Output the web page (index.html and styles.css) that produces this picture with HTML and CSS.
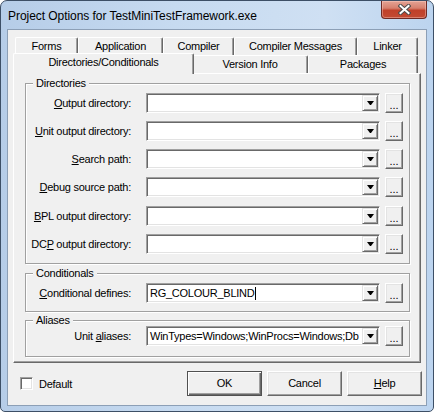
FILE: index.html
```html
<!DOCTYPE html>
<html>
<head>
<meta charset="utf-8">
<link rel="stylesheet" href="styles.css">
</head>
<body>
<div class="window">
  <div class="titlebar">
    <span class="title">Project Options for TestMiniTestFramework.exe</span>
    <div class="close">
      <svg width="13" height="11" viewBox="0 0 13 11">
        <path d="M2.5 2 L10.5 9 M10.5 2 L2.5 9" stroke="#4b4b4b" stroke-width="4" stroke-linecap="square" fill="none"/>
        <path d="M2.5 2 L10.5 9 M10.5 2 L2.5 9" stroke="#ffffff" stroke-width="2" stroke-linecap="square" fill="none"/>
      </svg>
    </div>
  </div>
  <div class="client">
    <div class="pages">
      <div class="tabrow">
        <div class="tab t-forms">Forms</div>
        <div class="tab t-app">Application</div>
        <div class="tab t-comp">Compiler</div>
        <div class="tab t-msg">Compiler Messages</div>
        <div class="tab t-link">Linker</div>
      </div>
      <div class="tabrow">
        <div class="tab t-dirs selected">Directories/Conditionals</div>
        <div class="tab t-ver">Version Info</div>
        <div class="tab t-pkg">Packages</div>
      </div>
      <div class="sheet">
        <div class="group g-dirs">
          <div class="gtitle">Directories</div>
          <div class="rows">
            <div class="row">
              <div class="label"><u>O</u>utput directory:</div>
              <div class="combo"><div class="ctext"></div><div class="drop"><svg width="7" height="4" viewBox="0 0 7 4"><polygon points="0,0 7,0 4,4 3,4" fill="#000"/></svg></div></div>
              <div class="dots">...</div>
            </div>
            <div class="row">
              <div class="label"><u>U</u>nit output directory:</div>
              <div class="combo"><div class="ctext"></div><div class="drop"><svg width="7" height="4" viewBox="0 0 7 4"><polygon points="0,0 7,0 4,4 3,4" fill="#000"/></svg></div></div>
              <div class="dots">...</div>
            </div>
            <div class="row">
              <div class="label"><u>S</u>earch path:</div>
              <div class="combo"><div class="ctext"></div><div class="drop"><svg width="7" height="4" viewBox="0 0 7 4"><polygon points="0,0 7,0 4,4 3,4" fill="#000"/></svg></div></div>
              <div class="dots">...</div>
            </div>
            <div class="row">
              <div class="label"><u>D</u>ebug source path:</div>
              <div class="combo"><div class="ctext"></div><div class="drop"><svg width="7" height="4" viewBox="0 0 7 4"><polygon points="0,0 7,0 4,4 3,4" fill="#000"/></svg></div></div>
              <div class="dots">...</div>
            </div>
            <div class="row shift">
              <div class="label"><u>B</u>PL output directory:</div>
              <div class="combo"><div class="ctext"></div><div class="drop"><svg width="7" height="4" viewBox="0 0 7 4"><polygon points="0,0 7,0 4,4 3,4" fill="#000"/></svg></div></div>
              <div class="dots">...</div>
            </div>
            <div class="row">
              <div class="label">DC<u>P</u> output directory:</div>
              <div class="combo"><div class="ctext"></div><div class="drop"><svg width="7" height="4" viewBox="0 0 7 4"><polygon points="0,0 7,0 4,4 3,4" fill="#000"/></svg></div></div>
              <div class="dots">...</div>
            </div>
          </div>
        </div>
        <div class="group g-cond">
          <div class="gtitle">Conditionals</div>
          <div class="rows">
            <div class="row">
              <div class="label"><u>C</u>onditional defines:</div>
              <div class="combo"><div class="ctext">RG_COLOUR_BLIND<span class="caret"></span></div><div class="drop"><svg width="7" height="4" viewBox="0 0 7 4"><polygon points="0,0 7,0 4,4 3,4" fill="#000"/></svg></div></div>
              <div class="dots">...</div>
            </div>
          </div>
        </div>
        <div class="group g-alias">
          <div class="gtitle">Aliases</div>
          <div class="rows">
            <div class="row">
              <div class="label">Unit <u>a</u>liases:</div>
              <div class="combo"><div class="ctext">WinTypes=Windows;WinProcs=Windows;Db</div><div class="drop"><svg width="7" height="4" viewBox="0 0 7 4"><polygon points="0,0 7,0 4,4 3,4" fill="#000"/></svg></div></div>
              <div class="dots">...</div>
            </div>
          </div>
        </div>
      </div>
    </div>
    <div class="footer">
      <div class="check"></div>
      <span class="check-label">Default</span>
      <div class="buttons">
        <div class="btn default">OK</div>
        <div class="btn">Cancel</div>
        <div class="btn"><u>H</u>elp</div>
      </div>
    </div>
  </div>
</div>
</body>
</html>
```

FILE: styles.css
```css
html, body {
  margin: 0;
  padding: 0;
  background: #ffffff;
}

body {
  font-family: "Liberation Sans", Arial, sans-serif;
  font-size: 11px;
  letter-spacing: -0.25px;
  color: #000;
}

.window {
  width: 434px;
  height: 412px;
  box-sizing: border-box;
  border: 1px solid #3d4f66;
  border-radius: 7px 7px 5px 5px;
  background: linear-gradient(90deg, #b6cde8 0%, #c6daf0 40%, #cfe0f3 75%, #bcd4ef 100%);
  overflow: hidden;
}

.titlebar {
  height: 28px;
  display: flex;
  align-items: flex-start;
  padding-left: 7px;
}

.title {
  font-family: "Liberation Sans", Arial, sans-serif;
  font-size: 12px;
  letter-spacing: -0.05px;
  line-height: 14px;
  margin-top: 8px;
  color: #000;
}

.close {
  margin-left: auto;
  margin-right: 6px;
  width: 46px;
  height: 18px;
  box-sizing: border-box;
  border: 1px solid #6e2a25;
  border-top: none;
  border-radius: 0 0 4px 4px;
  background: linear-gradient(180deg, #e4a395 0%, #d6806e 42%, #c0402a 55%, #c24a33 100%);
  box-shadow: inset 0 0 0 1px rgba(255, 215, 205, 0.4);
  display: flex;
  align-items: center;
  justify-content: center;
}

.close svg {
  display: block;
}

.client {
  margin-left: 6px;
  width: 420px;
  height: 377px;
  box-sizing: border-box;
  border: 1px solid #8c9fb6;
  background: #f0f0f0;
}

.pages {
  margin: 7px 5px 0 5px;
  width: 408px;
}

.tabrow {
  height: 18px;
  display: flex;
  align-items: flex-end;
  padding-left: 2px;
}

.tab {
  box-sizing: border-box;
  height: 18px;
  border-top: 1px solid #ffffff;
  border-left: 1px solid #ffffff;
  border-right: 1px solid #696969;
  border-radius: 2px 2px 0 0;
  box-shadow: inset -1px 0 0 #a0a0a0;
  background: #f0f0f0;
  text-align: center;
  line-height: 17px;
  white-space: nowrap;
}

.t-forms { width: 63px; }
.t-app { width: 85px; }
.t-comp { width: 71px; }
.t-msg { width: 123px; }
.t-link { width: 61px; }
.t-dirs { width: 177px; }
.t-ver { width: 116px; }
.t-pkg { width: 110px; }

.tab.selected {
  width: 181px;
  height: 21px;
  margin: 0 -2px -1px -2px;
  line-height: 17px;
  position: relative;
  z-index: 1;
}

.sheet {
  box-sizing: border-box;
  height: 290px;
  border-top: 1px solid #ffffff;
  border-left: 1px solid #ffffff;
  border-right: 1px solid #696969;
  border-bottom: 1px solid #696969;
  box-shadow: inset -1px -1px 0 #a0a0a0;
  padding-left: 11px;
  overflow: hidden;
}

.group {
  box-sizing: border-box;
  width: 385px;
  border: 1px solid #a0a0a0;
  box-shadow: inset 1px 1px 0 #ffffff, 1px 1px 0 #ffffff;
  padding-right: 5px;
}

.g-dirs { margin-top: 9px; padding-bottom: 9px; }
.g-cond { margin-top: 9px; padding-bottom: 8px; }
.g-alias { margin-top: 8px; padding-bottom: 10px; }

.gtitle {
  height: 13px;
  line-height: 13px;
  margin-top: -7px;
  margin-left: 7px;
  padding: 0 3px;
  width: fit-content;
  background: #f0f0f0;
  position: relative;
}

.rows {
  display: flex;
  flex-direction: column;
  gap: 8px;
  padding-top: 3px;
}

.row.shift {
  margin-top: 1px;
}

.g-alias .rows {
  padding-top: 0;
  margin-top: -1px;
}

.row {
  display: flex;
  align-items: center;
  height: 20px;
}

.label {
  width: 105px;
  text-align: right;
  line-height: 20px;
  white-space: nowrap;
  margin-right: 15px;
}

.combo {
  box-sizing: border-box;
  width: 234px;
  height: 20px;
  border: 1px solid;
  border-color: #a0a0a0 #ffffff #ffffff #a0a0a0;
  box-shadow: inset 1px 1px 0 #696969, inset -1px -1px 0 #e3e3e3;
  background: #ffffff;
  display: flex;
  padding: 1px;
}

.ctext {
  flex: 1;
  min-width: 0;
  overflow: hidden;
  white-space: nowrap;
  line-height: 16px;
  padding-left: 2px;
  display: flex;
  align-items: center;
}

.caret {
  display: inline-block;
  width: 1px;
  height: 13px;
  background: #000;
  margin-left: 1px;
}

.drop {
  box-sizing: border-box;
  flex: none;
  width: 16px;
  height: 16px;
  border: 1px solid;
  border-color: #e3e3e3 #696969 #696969 #e3e3e3;
  box-shadow: inset 1px 1px 0 #ffffff, inset -1px -1px 0 #a0a0a0;
  background: #f0f0f0;
  display: flex;
  align-items: center;
  justify-content: center;
}

.drop svg {
  display: block;
}

.dots {
  box-sizing: border-box;
  width: 18px;
  height: 20px;
  margin-left: 5px;
  border: 1px solid;
  border-color: #ffffff #696969 #696969 #ffffff;
  box-shadow: inset -1px -1px 0 #a0a0a0, inset 1px 1px 0 #e3e3e3;
  background: #f0f0f0;
  text-align: center;
  line-height: 22px;
  letter-spacing: 0;
}

.footer {
  display: flex;
  align-items: center;
  height: 25px;
  margin-top: 8px;
  padding: 0 4px 0 12px;
}

.check {
  box-sizing: border-box;
  width: 13px;
  height: 13px;
  border: 1px solid;
  border-color: #a0a0a0 #ffffff #ffffff #a0a0a0;
  box-shadow: inset 1px 1px 0 #696969, inset -1px -1px 0 #e3e3e3;
  background: #ffffff;
}

.check-label {
  margin-left: 6px;
}

.buttons {
  margin-left: auto;
  display: flex;
  gap: 5px;
}

.btn {
  box-sizing: border-box;
  width: 75px;
  height: 25px;
  border: 1px solid;
  border-color: #ffffff #696969 #696969 #ffffff;
  box-shadow: inset -1px -1px 0 #a0a0a0, inset 1px 1px 0 #e3e3e3;
  background: #f0f0f0;
  text-align: center;
  line-height: 23px;
}

.btn.default {
  border: 1px solid #505050;
  box-shadow: inset 1px 1px 0 #ffffff, inset -1px -1px 0 #696969, inset -2px -2px 0 #a0a0a0;
}
```
